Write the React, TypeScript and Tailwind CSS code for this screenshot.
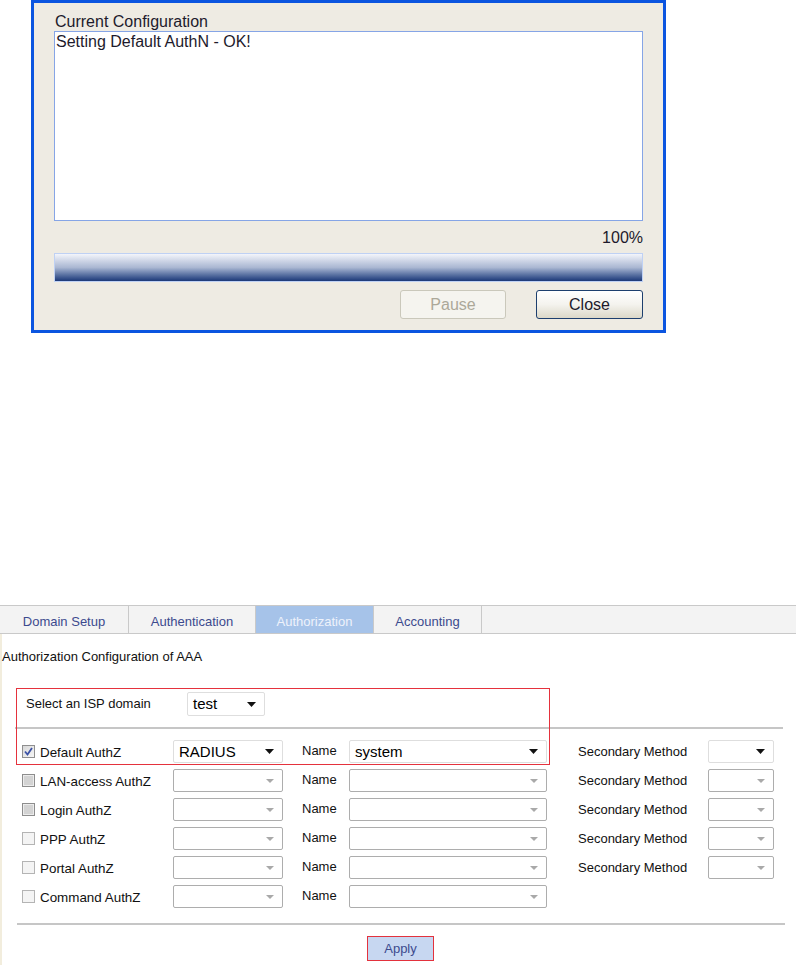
import clsx from "clsx";

type CheckState = "on" | "gray" | "off";

type AuthRow = {
  label: string;
  check: CheckState;
  method?: string;
  name?: string;
  active?: boolean;
  secondary: boolean;
};

const rows: AuthRow[] = [
  { label: "Default AuthZ", check: "on", method: "RADIUS", name: "system", active: true, secondary: true },
  { label: "LAN-access AuthZ", check: "gray", secondary: true },
  { label: "Login AuthZ", check: "gray", secondary: true },
  { label: "PPP AuthZ", check: "off", secondary: true },
  { label: "Portal AuthZ", check: "off", secondary: true },
  { label: "Command AuthZ", check: "off", secondary: false },
];

const tabs = [
  { label: "Domain Setup", w: "w-[129px]" },
  { label: "Authentication", w: "w-[127px]" },
  { label: "Authorization", w: "w-[118px]", active: true },
  { label: "Accounting", w: "w-[108px]" },
];

function Arrow({ active }: { active?: boolean }) {
  return active ? (
    <svg width="9" height="5" viewBox="0 0 9 5" className="shrink-0">
      <path d="M0 0H9L4.5 5Z" fill="#111" />
    </svg>
  ) : (
    <svg width="8" height="4" viewBox="0 0 8 4" className="shrink-0">
      <path d="M0 0H8L4 4Z" fill="#a9a9a9" />
    </svg>
  );
}

function Select({ value, active, className }: { value?: string; active?: boolean; className: string }) {
  return (
    <div
      className={clsx(
        "flex h-[23px] items-center justify-between rounded-[2px] border bg-white pl-[5px] pr-[8px] text-[15px] text-black",
        active ? "border-[#dedede]" : "border-[#adadad]",
        className,
      )}
    >
      <span className="leading-[18px]">{value}</span>
      <Arrow active={active} />
    </div>
  );
}

function Check({ state }: { state: CheckState }) {
  if (state === "on") {
    return (
      <span className="flex h-[13px] w-[13px] shrink-0 items-center justify-center border border-[#8f8f8f] bg-gradient-to-br from-[#d8d8d8] to-[#f6f6f6]">
        <svg width="9" height="9" viewBox="0 0 9 9">
          <path d="M1 4.5L3.5 7.5L8 1" stroke="#3c52a6" strokeWidth="1.8" fill="none" />
        </svg>
      </span>
    );
  }
  return (
    <span
      className={clsx(
        "h-[13px] w-[13px] shrink-0 border",
        state === "gray"
          ? "border-[#8d8d8d] bg-[#d3d3d3] shadow-[inset_0_0_0_1px_#ececec]"
          : "border-[#b4b4b4] bg-[#f4f4f4]",
      )}
    />
  );
}

export default function App() {
  return (
    <div className="h-[965px] w-[796px] bg-white font-['Liberation_Sans',Arial,sans-serif]">
      {/* progress dialog */}
      <div className="ml-[31px] h-[333px] w-[635px] border-[3px] border-[#0b55e0] bg-[#eeebe3] px-[20px] pt-[9px]">
        <div className="h-[19px] pl-px text-[16px] leading-[19px] text-[#1d1a2c]">Current Configuration</div>
        <div className="h-[190px] border border-[#86a5e6] bg-white px-px text-[16px] leading-[19px] text-[#1d1a2c]">
          Setting Default AuthN - OK!
        </div>
        <div className="mt-[7px] h-[19px] text-right text-[16px] leading-[19px] text-[#1d1a2c]">100%</div>
        <div className="mt-[6px] h-[29px] border border-[#bfd1f4] bg-gradient-to-b from-[#f3f5fb] via-[#aab7d2] to-[#1c3878]" />
        <div className="mt-[8px] flex justify-end gap-[30px]">
          <button className="h-[29px] w-[106px] rounded-[3px] border border-[#cac8bb] bg-[#f5f4ef] text-[16px] text-[#aca899]">
            Pause
          </button>
          <button className="h-[29px] w-[107px] rounded-[3px] border border-[#1d3f6e] bg-gradient-to-b from-white via-[#f4f3ee] to-[#dcd8c8] text-[16px] text-[#1d1a2c]">
            Close
          </button>
        </div>
      </div>

      {/* AAA configuration page */}
      <div className="relative mt-[272px]">
        <div className="flex h-[29px] border-y border-[#c9c9c9] bg-[#f3f3f3]">
          {tabs.map((t) => (
            <div
              key={t.label}
              className={clsx(
                "flex items-center justify-center border-r border-[#c9c9c9] pt-[5px] text-[13px]",
                t.w,
                t.active ? "bg-[#a6c3e9] text-[#eef2fb]" : "text-[#3c4a8e]",
              )}
            >
              {t.label}
            </div>
          ))}
        </div>

        <div className="border-l-2 border-[#f2eddd] pb-[5px]">
          <div className="pt-[15px] text-[13px] leading-[15px] text-[#111]">Authorization Configuration of AAA</div>

          <div className="mt-[28px] flex h-[24px] items-center pl-[24px] text-[13px] text-[#111]">
            <span className="w-[161px]">Select an ISP domain</span>
            <Select value="test" active className="h-[24px] w-[78px]" />
          </div>

          <div className="ml-[13px] mt-[11px] h-[2px] w-[768px] bg-[#c6c6c6]" />

          <div className="mt-[8px]">
            {rows.map((r) => (
              <div key={r.label} className="flex h-[29px] items-center pl-[20px] text-[13px] text-[#111]">
                <div className="flex w-[151px] items-center gap-[5px]">
                  <Check state={r.check} />
                  <span className="mt-[3px] text-[13.4px]">{r.label}</span>
                </div>
                <Select value={r.method} active={r.active} className="w-[110px]" />
                <span className="-mt-[2px] w-[66px] pl-[19px]">Name</span>
                <Select value={r.name} active={r.active} className="w-[198px]" />
                {r.secondary && (
                  <>
                    <span className="w-[161px] pl-[31px]">Secondary Method</span>
                    <Select active={r.active} className="w-[66px]" />
                  </>
                )}
              </div>
            ))}
          </div>

          <div className="ml-[15px] mt-[12px] h-[2px] w-[768px] bg-[#c6c6c6]" />

          <div className="mt-[11px] flex justify-center pr-[1px]">
            <button className="ml-[4px] h-[25px] w-[67px] border border-[#e3323d] bg-[#c7d7f1] text-[13px] text-[#3c4a8e]">
              Apply
            </button>
          </div>
        </div>

        {/* red annotation */}
        <div className="pointer-events-none absolute left-[16px] top-[83px] h-[77px] w-[534px] border border-[#e5323d]" />
      </div>
    </div>
  );
}
